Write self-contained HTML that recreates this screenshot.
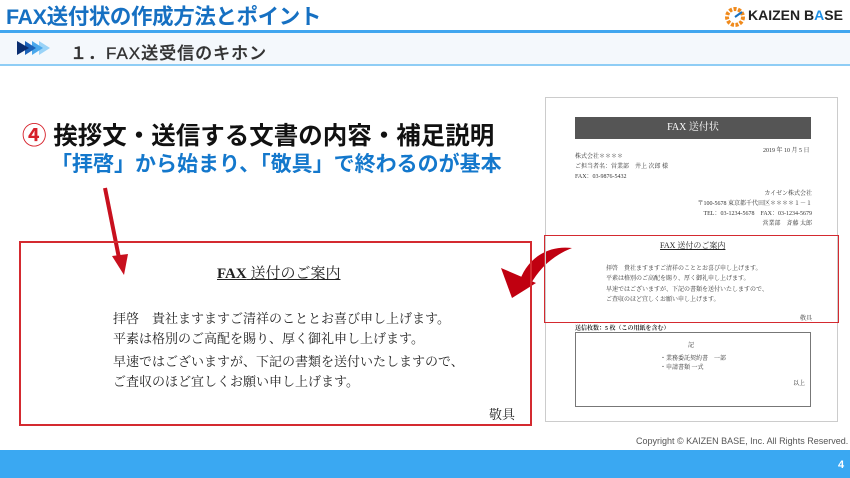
<!DOCTYPE html>
<html><head><meta charset="utf-8"><style>
*{margin:0;padding:0;box-sizing:border-box}
body{width:850px;height:478px;overflow:hidden;background:#fff;position:relative;font-family:"Liberation Sans","Noto Sans CJK JP",sans-serif}
.a{position:absolute;white-space:nowrap}
.serif{font-family:"Liberation Serif","Noto Serif CJK SC",serif}
.doc .a{font-size:6px;color:#333}
</style></head><body>
<div class="a" style="left:6px;top:0px;font-size:21.5px;font-weight:bold;color:#1670c2;letter-spacing:-0.4px">FAX送付状の作成方法とポイント</div>
<svg class="a" style="left:724px;top:6px" width="22" height="22" viewBox="0 0 22 22"><circle cx="11" cy="11" r="8" fill="none" stroke="#f08a1c" stroke-width="4" stroke-dasharray="3 1.5"/><circle cx="11" cy="11" r="4" fill="#fff"/><path d="M11 11 L18 6" stroke="#1670c2" stroke-width="2"/></svg>
<div class="a" style="left:748px;top:7px;font-size:14px;font-weight:bold;color:#222">KAIZEN B<span style="color:#1e90e6">A</span>SE</div>
<div class="a" style="left:0;top:30px;width:850px;height:3px;background:#41a6ef"></div>
<div class="a" style="left:0;top:33px;width:850px;height:33px;background:#f4f8fc;border-bottom:2px solid #8fcdf5"></div>
<svg class="a" style="left:17px;top:41px" width="40" height="14" viewBox="0 0 40 14"><path d="M22 0 L33 7 L22 14Z" fill="#9ad3f7"/><path d="M15 0 L26 7 L15 14Z" fill="#4aa8ec"/><path d="M8 0 L19 7 L8 14Z" fill="#1c62b8"/><path d="M0 0 L12 7 L0 14Z" fill="#0b2e70"/></svg>
<div class="a" style="left:70px;top:39px;font-size:17px;font-weight:500;color:#333;letter-spacing:1px;-webkit-text-stroke:0.3px #333">１．FAX送受信のキホン</div>
<div class="a" style="left:22px;top:117px;font-size:24.5px;font-weight:bold;color:#111"><span style="color:#d6202a">④</span> 挨拶文・送信する文書の内容・補足説明</div>
<div class="a" style="left:51px;top:148px;font-size:21px;font-weight:bold;color:#1478cc">「拝啓」から始まり、「敬具」で終わるのが基本</div>
<svg class="a" style="left:0;top:0" width="850" height="478"><line x1="105" y1="188" x2="119" y2="258" stroke="#c8101e" stroke-width="4"/><path d="M112 256 L124 275 L128 254Z" fill="#c8101e"/>
<path d="M572 248 C548 245 528 258 520 280 L530 285 C540 268 552 256 572 248Z" fill="#c00010"/><path d="M501 268 L512 298 L536 283Z" fill="#c00010"/></svg>
<div class="a" style="left:19px;top:241px;width:513px;height:185px;border:2px solid #d42a30"></div>
<div class="a serif" style="left:217px;top:262px;font-size:15px;color:#222;text-decoration:underline"><b>FAX</b> 送付のご案内</div>
<div class="a serif" style="left:113px;top:309px;font-size:13px;line-height:20px;color:#222">拝啓　貴社ますますご清祥のこととお喜び申し上げます。<br>平素は格別のご高配を賜り、厚く御礼申し上げます。</div>
<div class="a serif" style="left:113px;top:352px;font-size:13px;line-height:20px;color:#222">早速ではございますが、下記の書類を送付いたしますので、<br>ご査収のほど宜しくお願い申し上げます。</div>
<div class="a serif" style="left:489px;top:404px;font-size:13px;color:#222">敬具</div>
<div class="doc">
<div class="a" style="left:545px;top:97px;width:293px;height:325px;border:1px solid #ccc"></div>
<div class="a serif" style="left:575px;top:117px;width:236px;height:22px;background:#555;font-size:10px!important;text-align:center;line-height:22px;color:#fff!important">FAX 送付状</div>
<div class="a serif" style="left:763px;top:145px">2019 年 10 月 5 日</div>
<div class="a serif" style="left:575px;top:152px;line-height:10px">株式会社＊＊＊＊<br>ご担当者名：営業部　井上 次郎 様<br>FAX：03-9876-5432</div>
<div class="a serif" style="left:660px;top:189px;width:152px;text-align:right;line-height:10px">カイゼン株式会社<br>〒100-5678 東京都千代田区＊＊＊＊１－１<br>TEL：03-1234-5678　FAX：03-1234-5679<br>営業部　斉藤 太郎</div>
<div class="a" style="left:544px;top:235px;width:295px;height:88px;border:1.5px solid #d42a30"></div>
<div class="a serif" style="left:660px;top:240px;font-size:8px!important;text-decoration:underline;color:#222">FAX 送付のご案内</div>
<div class="a serif" style="left:606px;top:264px;line-height:10px">拝啓　貴社ますますご清祥のこととお喜び申し上げます。<br>平素は格別のご高配を賜り、厚く御礼申し上げます。</div>
<div class="a serif" style="left:606px;top:285px;line-height:10px">早速ではございますが、下記の書類を送付いたしますので、<br>ご査収のほど宜しくお願い申し上げます。</div>
<div class="a serif" style="left:800px;top:313px">敬具</div>
<div class="a serif" style="left:575px;top:323px;font-weight:bold;color:#222">送信枚数：5 枚（この用紙を含む）</div>
<div class="a" style="left:575px;top:332px;width:236px;height:75px;border:1px solid #777"></div>
<div class="a serif" style="left:688px;top:340px">記</div>
<div class="a serif" style="left:660px;top:355px;line-height:9px">・業務委託契約書　一部<br>・申請書類 一式</div>
<div class="a serif" style="left:793px;top:378px">以上</div>
</div>
<div class="a" style="left:636px;top:436px;font-size:9px;color:#555">Copyright ©  KAIZEN BASE, Inc.  All Rights Reserved.</div>
<div class="a" style="left:0;top:450px;width:850px;height:28px;background:#3aa8f2"></div>
<div class="a" style="left:838px;top:459px;font-size:11px;font-weight:bold;color:#fff">4</div>
</body></html>
